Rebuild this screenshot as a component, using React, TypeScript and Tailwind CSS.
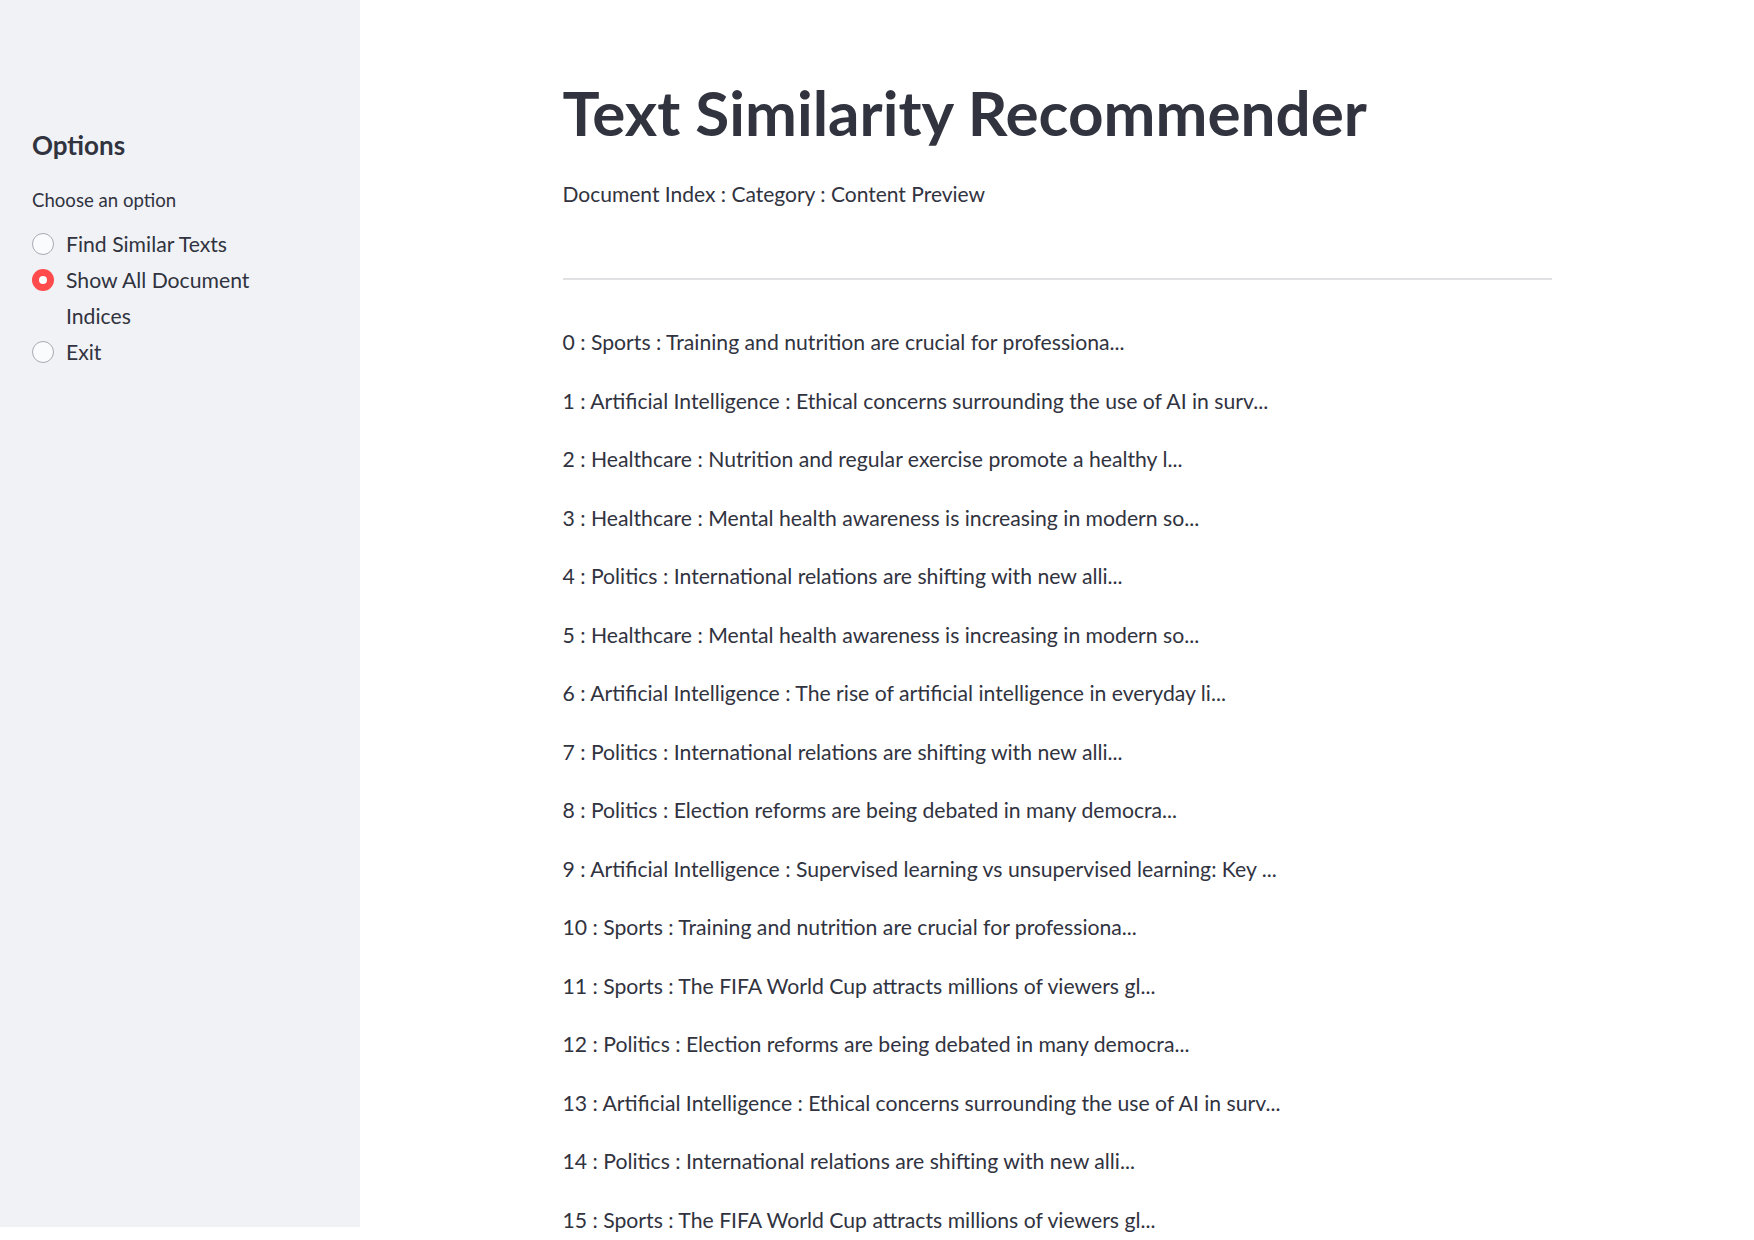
import React from "react";

const rows = [
  "0 : Sports : Training and nutrition are crucial for professiona...",
  "1 : Artificial Intelligence : Ethical concerns surrounding the use of AI in surv...",
  "2 : Healthcare : Nutrition and regular exercise promote a healthy l...",
  "3 : Healthcare : Mental health awareness is increasing in modern so...",
  "4 : Politics : International relations are shifting with new alli...",
  "5 : Healthcare : Mental health awareness is increasing in modern so...",
  "6 : Artificial Intelligence : The rise of artificial intelligence in everyday li...",
  "7 : Politics : International relations are shifting with new alli...",
  "8 : Politics : Election reforms are being debated in many democra...",
  "9 : Artificial Intelligence : Supervised learning vs unsupervised learning: Key ...",
  "10 : Sports : Training and nutrition are crucial for professiona...",
  "11 : Sports : The FIFA World Cup attracts millions of viewers gl...",
  "12 : Politics : Election reforms are being debated in many democra...",
  "13 : Artificial Intelligence : Ethical concerns surrounding the use of AI in surv...",
  "14 : Politics : International relations are shifting with new alli...",
  "15 : Sports : The FIFA World Cup attracts millions of viewers gl...",
];

function Radio({ checked }: { checked?: boolean }) {
  if (checked) {
    return (
      <div className="mt-[7px] flex h-[22px] w-[22px] shrink-0 items-center justify-center rounded-full bg-[#ff4b4b]">
        <div className="h-[8px] w-[8px] rounded-full bg-white" />
      </div>
    );
  }
  return (
    <div className="mt-[7px] h-[22px] w-[22px] shrink-0 rounded-full border-[1.5px] border-[#a7aab3] bg-[#fafbfc]" />
  );
}

export default function App() {
  return (
    <div
      className="flex h-[1240px] w-full overflow-hidden bg-white text-[#31333f]"
      style={{ fontFamily: "Lato, 'Noto Sans', sans-serif" }}
    >
      <aside className="h-[1227px] w-[360px] shrink-0 bg-[#f0f2f6] px-[32px] pt-[130px]">
        <h2 className="text-[26px] font-bold leading-[30px]">Options</h2>
        <div className="mt-[27px] text-[18.6px] leading-[26px]">Choose an option</div>
        <div className="mt-[13px] flex flex-col">
          <div className="flex items-start gap-[12px]">
            <Radio />
            <span className="text-[21.2px] leading-[36px]">Find Similar Texts</span>
          </div>
          <div className="flex items-start gap-[12px]">
            <Radio checked />
            <span className="text-[21.2px] leading-[36px]">
              Show All Document
              <br />
              Indices
            </span>
          </div>
          <div className="flex items-start gap-[12px]">
            <Radio />
            <span className="text-[21.2px] leading-[36px]">Exit</span>
          </div>
        </div>
      </aside>
      <main className="flex-1">
        <div className="mx-auto w-[989px] pt-[76px]">
          <h1 className="whitespace-nowrap text-[62px] font-bold leading-[72px]">
            Text Similarity Recommender
          </h1>
          <p className="mt-[28px] text-[21px] leading-[36px]">
            Document Index : Category : Content Preview
          </p>
          <div className="mt-[66px] h-[2px] w-full bg-[#e1e1e4]" />
          <div className="mt-[45px] flex flex-col gap-[22.7px]">
            {rows.map((r) => (
              <p key={r} className="whitespace-nowrap text-[21.2px] leading-[35.84px]">
                {r}
              </p>
            ))}
          </div>
        </div>
      </main>
    </div>
  );
}
